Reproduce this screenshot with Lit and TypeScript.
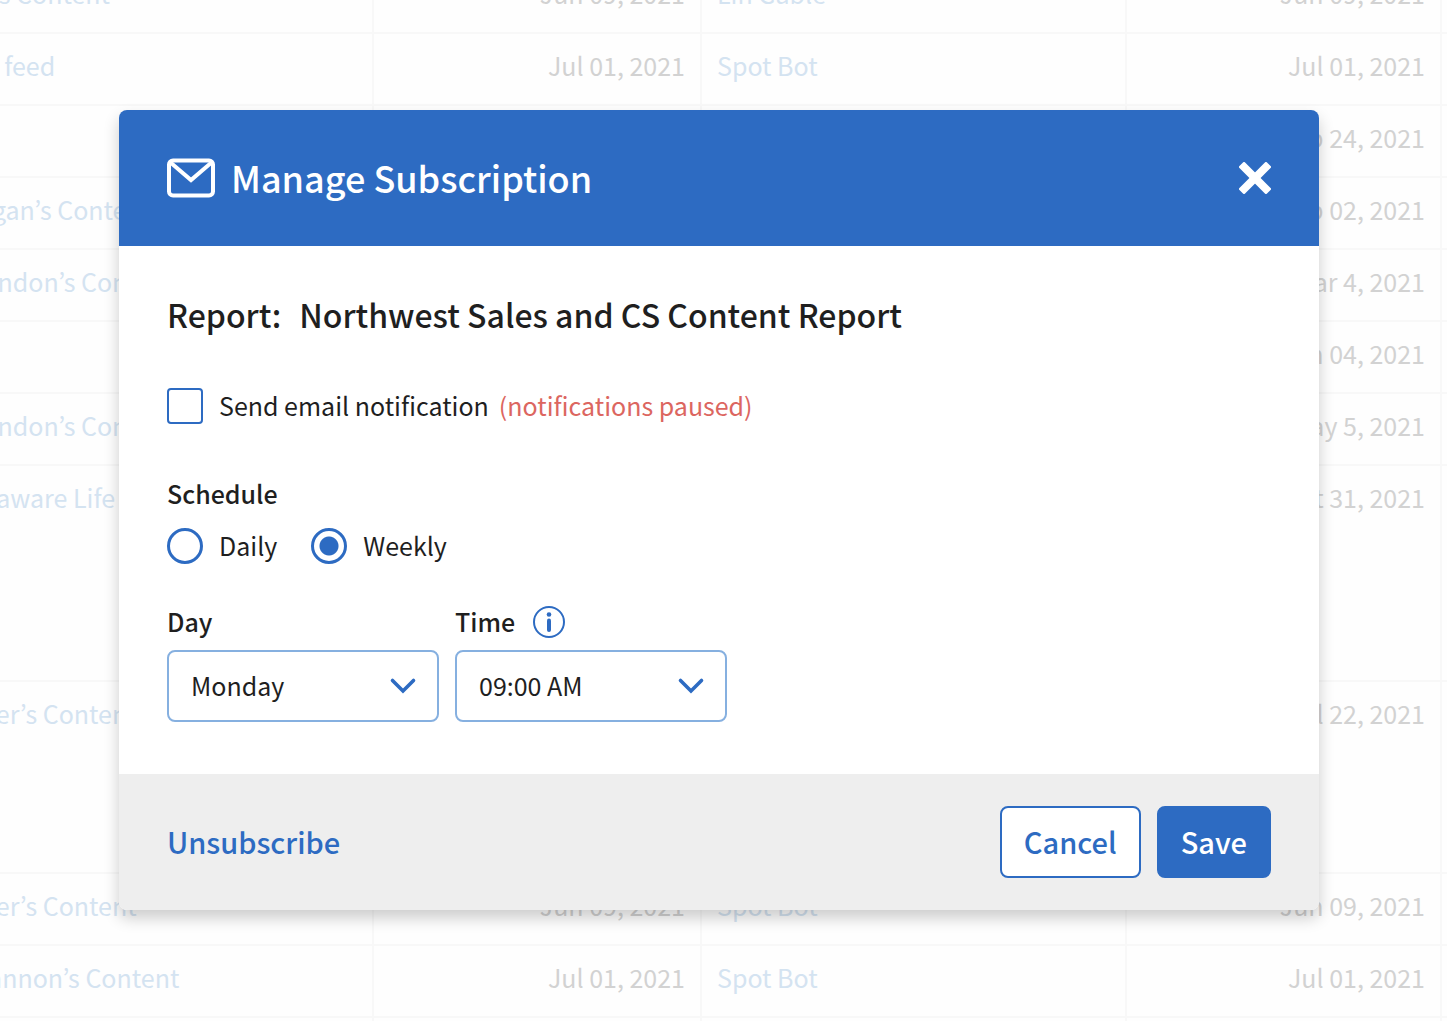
import { LitElement, html, css } from "lit";
import { customElement, state } from "lit/decorators.js";
import { classMap } from "lit/directives/class-map.js";

interface ContentRow {
  name: string;
  updated: string;
  owner: string;
  created: string;
  size?: "tall" | "medium";
}

const ROWS: ContentRow[] = [
  { name: "Lin’s Content", updated: "Jun 09, 2021", owner: "Lin Gable", created: "Jun 09, 2021" },
  { name: "Bot feed", updated: "Jul 01, 2021", owner: "Spot Bot", created: "Jul 01, 2021" },
  { name: "", updated: "", owner: "", created: "Sep 24, 2021" },
  { name: "Megan’s Content", updated: "", owner: "", created: "Sep 02, 2021" },
  { name: "Brandon’s Content", updated: "", owner: "", created: "Mar 4, 2021" },
  { name: "", updated: "", owner: "", created: "Jun 04, 2021" },
  { name: "Brandon’s Content", updated: "", owner: "", created: "May 5, 2021" },
  { name: "Delaware Life", updated: "", owner: "", created: "Oct 31, 2021", size: "tall" },
  { name: "Peter’s Content", updated: "", owner: "", created: "Jul 22, 2021", size: "medium" },
  { name: "Peter’s Content", updated: "Jun 09, 2021", owner: "Spot Bot", created: "Jun 09, 2021" },
  { name: "Shannon’s Content", updated: "Jul 01, 2021", owner: "Spot Bot", created: "Jul 01, 2021" },
  { name: "", updated: "", owner: "", created: "" },
];

@customElement("content-table")
export class ContentTable extends LitElement {
  static styles = css`
    :host {
      display: block;
      overflow: hidden;
    }
    .table {
      width: calc(100% + 57px);
      margin: -38px 0 0 -57px;
      table-layout: fixed;
      border-collapse: separate;
      border-spacing: 0;
      font-size: 25px;
      line-height: 32px;
      color: #d2d2d2;
    }
    .col-name {
      width: 431px;
    }
    .col-updated {
      width: 328px;
    }
    .col-created {
      width: 315px;
    }
    .col-more {
      width: 5px;
    }
    .cell {
      box-sizing: border-box;
      height: 72px;
      padding: 15px;
      border-right: 2px solid #f8f8f8;
      border-bottom: 2px solid #f8f8f8;
      vertical-align: top;
      text-align: left;
      white-space: nowrap;
    }
    .cell.date {
      text-align: right;
    }
    .cell.more {
      padding: 0;
      border-right: 0;
    }
    .tall .cell {
      height: 216px;
    }
    .medium .cell {
      height: 192px;
    }
    .link {
      color: #d4e3f1;
      text-decoration: none;
    }
  `;

  render() {
    return html`
      <table class="table">
        <colgroup>
          <col class="col-name" />
          <col class="col-updated" />
          <col />
          <col class="col-created" />
          <col class="col-more" />
        </colgroup>
        <tbody>
          ${ROWS.map(
            (row) => html`
              <tr class=${classMap({ tall: row.size === "tall", medium: row.size === "medium" })}>
                <td class="cell">${row.name ? html`<a class="link" href="#">${row.name}</a>` : ""}</td>
                <td class="cell date">${row.updated}</td>
                <td class="cell">${row.owner ? html`<a class="link" href="#">${row.owner}</a>` : ""}</td>
                <td class="cell date">${row.created}</td>
                <td class="cell more"></td>
              </tr>
            `
          )}
        </tbody>
      </table>
    `;
  }
}

@customElement("subscription-dialog")
export class SubscriptionDialog extends LitElement {
  @state() private schedule = "weekly";

  static styles = css`
    :host {
      display: block;
    }
    .dialog {
      border-radius: 8px;
      background: #fff;
      box-shadow: 0 8px 16px rgba(0, 0, 0, 0.2);
      color: #1f1f1f;
      font-size: 25px;
      line-height: 34px;
    }
    .header {
      display: flex;
      align-items: center;
      gap: 16px;
      box-sizing: border-box;
      min-height: 136px;
      padding: 32px 48px;
      border-radius: 8px 8px 0 0;
      background: #2d6bc2;
      color: #fff;
    }
    .title {
      flex: 1;
      margin: 0;
      padding-bottom: 2px;
      font-size: 36px;
      line-height: 48px;
      font-weight: 500;
    }
    .icon {
      display: block;
      flex: none;
    }
    button {
      font: inherit;
      cursor: pointer;
    }
    .plain {
      padding: 0;
      border: 0;
      background: none;
      color: inherit;
    }
    .body {
      display: flex;
      flex-direction: column;
      padding: 48px 48px 52px;
    }
    .report {
      display: flex;
      gap: 18px;
      margin: 0 0 54px;
      font-size: 32px;
      line-height: 40px;
      font-weight: 500;
    }
    .option {
      display: flex;
      align-items: flex-start;
      gap: 16px;
    }
    .paused {
      color: #dc6660;
    }
    .notify {
      display: flex;
      align-items: flex-start;
      gap: 10px;
    }
    .box,
    .radio {
      appearance: none;
      flex: none;
      box-sizing: border-box;
      width: 36px;
      height: 36px;
      margin: 0;
      background: #fff;
    }
    .box {
      border: 2px solid #2d6bc2;
      border-radius: 4px;
    }
    .box:checked {
      background: #2d6bc2;
    }
    .radio {
      border: 3px solid #2d6bc2;
      border-radius: 50%;
    }
    .radio:checked {
      background: radial-gradient(circle, #2d6bc2 9px, #fff 10px);
    }
    .schedule {
      margin: 52px 0 0;
      padding: 0;
      border: 0;
    }
    .label {
      padding: 0;
      font-weight: 500;
    }
    .options {
      display: flex;
      gap: 34px;
      padding-top: 18px;
    }
    .fields {
      display: flex;
      gap: 16px;
      margin-top: 40px;
    }
    .field {
      display: flex;
      flex-direction: column;
      gap: 12px;
      width: 272px;
    }
    .field-head {
      display: flex;
      align-items: flex-end;
      gap: 18px;
    }
    .info {
      color: #2d6bc2;
    }
    .select-wrap {
      display: grid;
      align-items: center;
    }
    .select-wrap > * {
      grid-area: 1 / 1;
    }
    .select {
      appearance: none;
      box-sizing: border-box;
      width: 100%;
      height: 72px;
      padding: 0 56px 2px 22px;
      border: 2px solid #86b0e0;
      border-radius: 8px;
      background: #fff;
      color: inherit;
      font: inherit;
    }
    .chevron {
      justify-self: end;
      margin-right: 22px;
      color: #2d6bc2;
      pointer-events: none;
    }
    .footer {
      display: flex;
      align-items: center;
      gap: 16px;
      box-sizing: border-box;
      min-height: 136px;
      padding: 32px 48px;
      border-radius: 0 0 8px 8px;
      background: #eee;
      font-size: 29px;
      font-weight: 500;
    }
    .unsubscribe {
      margin-right: auto;
      padding-bottom: 2px;
      color: #2d6bc2;
    }
    .button {
      box-sizing: border-box;
      height: 72px;
      padding: 0 22px 2px;
      border: 2px solid #2d6bc2;
      border-radius: 8px;
      background: #fff;
      color: #2d6bc2;
    }
    .button.primary {
      background: #2d6bc2;
      color: #fff;
    }
  `;

  private chevron() {
    return html`
      <svg class="icon chevron" width="28" height="18" viewBox="0 0 28 18" fill="none" stroke="currentColor"
        stroke-width="3.6" stroke-linecap="round" stroke-linejoin="miter" aria-hidden="true">
        <path d="M3.5 3.5 14 14 24.5 3.5" />
      </svg>
    `;
  }

  private radio(value: string, label: string) {
    return html`
      <label class="option">
        <input class="radio" type="radio" name="schedule" .value=${value} .checked=${this.schedule === value}
          @change=${() => (this.schedule = value)} />
        ${label}
      </label>
    `;
  }

  render() {
    return html`
      <section class="dialog" role="dialog" aria-modal="true" aria-labelledby="dialog-title">
        <header class="header">
          <svg class="icon" width="48" height="40" viewBox="0 0 48 40" fill="none" stroke="#fff" stroke-width="4"
            stroke-linejoin="miter" aria-hidden="true">
            <rect x="2" y="2.5" width="44" height="35" rx="4" />
            <path d="M3.5 4.5 24 22 44.5 4.5" />
          </svg>
          <h1 class="title" id="dialog-title">Manage Subscription</h1>
          <button class="plain" type="button" aria-label="Close">
            <svg class="icon" width="32" height="32" viewBox="1 1 32 32" fill="#fff">
              <rect x="-2.5" y="13" width="39" height="8" rx="1.5" transform="rotate(45 17 17)" />
              <rect x="-2.5" y="13" width="39" height="8" rx="1.5" transform="rotate(-45 17 17)" />
            </svg>
          </button>
        </header>

        <div class="body">
          <h2 class="report"><span>Report:</span><span>Northwest Sales and CS Content Report</span></h2>

          <div class="notify">
            <label class="option">
              <input class="box" type="checkbox" />
              Send email notification
            </label>
            <span class="paused">(notifications paused)</span>
          </div>

          <fieldset class="schedule">
            <legend class="label">Schedule</legend>
            <div class="options">${this.radio("daily", "Daily")}${this.radio("weekly", "Weekly")}</div>
          </fieldset>

          <div class="fields">
            <div class="field">
              <div class="field-head"><label class="label" for="day">Day</label></div>
              <div class="select-wrap">
                <select class="select" id="day">
                  <option>Monday</option>
                </select>
                ${this.chevron()}
              </div>
            </div>
            <div class="field">
              <div class="field-head">
                <label class="label" for="time">Time</label>
                <button class="plain info" type="button" aria-label="About the time">
                  <svg class="icon" width="32" height="32" viewBox="0 0 32 32" fill="none" stroke="currentColor">
                    <circle cx="16" cy="16" r="15" stroke-width="2" />
                    <path d="M16 14.5V24" stroke-width="4" stroke-linecap="round" />
                    <circle cx="16" cy="8.5" r="2.3" fill="currentColor" stroke="none" />
                  </svg>
                </button>
              </div>
              <div class="select-wrap">
                <select class="select" id="time">
                  <option>09:00 AM</option>
                </select>
                ${this.chevron()}
              </div>
            </div>
          </div>
        </div>

        <footer class="footer">
          <button class="plain unsubscribe" type="button">Unsubscribe</button>
          <button class="button" type="button">Cancel</button>
          <button class="button primary" type="button">Save</button>
        </footer>
      </section>
    `;
  }
}

@customElement("app-root")
export class AppRoot extends LitElement {
  static styles = css`
    :host {
      display: grid;
      height: 100vh;
      overflow: hidden;
      background: #fefefe;
      font-family: "Noto Sans CJK KR", "Noto Sans", sans-serif;
    }
    .page,
    .overlay {
      grid-area: 1 / 1;
      min-width: 0;
      min-height: 0;
    }
    .overlay {
      z-index: 1;
      padding: 110px 128px 48px 119px;
    }
  `;

  render() {
    return html`
      <content-table class="page"></content-table>
      <div class="overlay"><subscription-dialog></subscription-dialog></div>
    `;
  }
}
